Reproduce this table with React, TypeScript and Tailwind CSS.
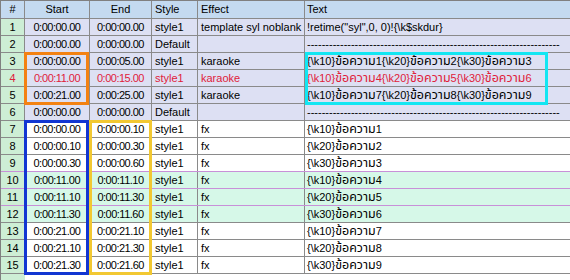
import React from "react";

type Row = {
  n: number;
  start: string;
  end: string;
  style: string;
  effect: string;
  text: string;
  bg: "lav" | "white" | "mint";
  red?: boolean;
  pink?: boolean;
};

const rows: Row[] = [
  { n: 1, start: "0:00:00.00", end: "0:00:00.00", style: "style1", effect: "template syl noblank", text: '!retime("syl",0, 0)!{\\k$skdur}', bg: "lav" },
  { n: 2, start: "0:00:00.00", end: "0:00:00.00", style: "Default", effect: "", text: "-".repeat(69), bg: "lav" },
  { n: 3, start: "0:00:00.00", end: "0:00:05.00", style: "style1", effect: "karaoke", text: "{\\k10}ข้อความ1{\\k20}ข้อความ2{\\k30}ข้อความ3", bg: "lav" },
  { n: 4, start: "0:00:11.00", end: "0:00:15.00", style: "style1", effect: "karaoke", text: "{\\k10}ข้อความ4{\\k20}ข้อความ5{\\k30}ข้อความ6", bg: "lav", red: true },
  { n: 5, start: "0:00:21.00", end: "0:00:25.00", style: "style1", effect: "karaoke", text: "{\\k10}ข้อความ7{\\k20}ข้อความ8{\\k30}ข้อความ9", bg: "lav" },
  { n: 6, start: "0:00:00.00", end: "0:00:00.00", style: "Default", effect: "", text: "-".repeat(69), bg: "lav" },
  { n: 7, start: "0:00:00.00", end: "0:00:00.10", style: "style1", effect: "fx", text: "{\\k10}ข้อความ1", bg: "white" },
  { n: 8, start: "0:00:00.10", end: "0:00:00.30", style: "style1", effect: "fx", text: "{\\k20}ข้อความ2", bg: "white" },
  { n: 9, start: "0:00:00.30", end: "0:00:00.60", style: "style1", effect: "fx", text: "{\\k30}ข้อความ3", bg: "white", pink: true },
  { n: 10, start: "0:00:11.00", end: "0:00:11.10", style: "style1", effect: "fx", text: "{\\k10}ข้อความ4", bg: "mint", pink: true },
  { n: 11, start: "0:00:11.10", end: "0:00:11.30", style: "style1", effect: "fx", text: "{\\k20}ข้อความ5", bg: "mint", pink: true },
  { n: 12, start: "0:00:11.30", end: "0:00:11.60", style: "style1", effect: "fx", text: "{\\k30}ข้อความ6", bg: "mint" },
  { n: 13, start: "0:00:21.00", end: "0:00:21.10", style: "style1", effect: "fx", text: "{\\k10}ข้อความ7", bg: "white" },
  { n: 14, start: "0:00:21.10", end: "0:00:21.30", style: "style1", effect: "fx", text: "{\\k20}ข้อความ8", bg: "white" },
  { n: 15, start: "0:00:21.30", end: "0:00:21.60", style: "style1", effect: "fx", text: "{\\k30}ข้อความ9", bg: "white" },
];

const bgClass = {
  lav: "bg-[#dde0f3]",
  white: "bg-white",
  mint: "bg-[#d6f8e8]",
};

function TextCell({ text }: { text: string }) {
  const parts = text.split(/(ข้อความ)/);
  return (
    <>
      {parts.map((p, i) =>
        p === "ข้อความ" ? (
          <span key={i} className="text-[12.5px]">
            {p}
          </span>
        ) : (
          <span key={i}>{p}</span>
        )
      )}
    </>
  );
}

export default function App() {
  return (
    <div
      className="relative w-[570px] h-[280px] overflow-hidden bg-white text-[11px] leading-none text-black"
      style={{ fontFamily: '"Liberation Sans", Arial, "Noto Sans Thai", "Noto Sans", sans-serif' }}
    >
      <div className="flex flex-col border-l border-t border-[#808080]">
        {/* header */}
        <div className="flex h-[18px] items-center bg-[#c4daf0] border-b border-[#8a8a8a]">
          <div className="w-[24px] h-full flex items-center justify-center border-r border-[#8a8a8a]">#</div>
          <div className="w-[65px] h-full flex items-center justify-center border-r border-[#8a8a8a]">Start</div>
          <div className="w-[62px] h-full flex items-center justify-center border-r border-[#8a8a8a]">End</div>
          <div className="w-[46px] h-full flex items-center pl-[3px] border-r border-[#8a8a8a]">Style</div>
          <div className="w-[107px] h-full flex items-center pl-[3px] border-r border-[#8a8a8a]">Effect</div>
          <div className="flex-1 h-full flex items-center pl-[2px]">Text</div>
        </div>
        {rows.map((r) => (
          <div
            key={r.n}
            className={`flex h-[17px] border-b ${r.pink ? "border-[#c890d8]" : "border-[#8a8a8a]"} ${bgClass[r.bg]} ${r.red ? "text-[#e0203a]" : "text-black"}`}
          >
            <div className="w-[24px] h-full flex items-center justify-center bg-[#cdeed5] border-r border-[#8a8a8a]">{r.n}</div>
            <div className="w-[65px] h-full flex items-center justify-center tracking-[-0.5px] border-r border-[#8a8a8a]">{r.start}</div>
            <div className="w-[62px] h-full flex items-center justify-center tracking-[-0.5px] border-r border-[#8a8a8a]">{r.end}</div>
            <div className="w-[46px] h-full flex items-center pl-[3px] border-r border-[#8a8a8a]">{r.style}</div>
            <div className="w-[107px] h-full flex items-center pl-[3px] border-r border-[#8a8a8a] whitespace-nowrap">{r.effect}</div>
            <div className="flex-1 h-full flex items-center pl-[2px] whitespace-nowrap overflow-hidden">
              <TextCell text={r.text} />
            </div>
          </div>
        ))}
        <div className="flex h-[10px]">
          <div className="w-[24px] h-full bg-[#cdeed5]" />
        </div>
      </div>

      {/* annotation boxes */}
      <div className="absolute left-[24px] top-[52px] w-[65px] h-[53px] border-[3px] border-[#f38212]" />
      <div className="absolute left-[305px] top-[52px] w-[243px] h-[53px] border-[3px] border-[#12e6f2]" />
      <div className="absolute left-[24px] top-[120px] w-[65px] h-[155px] border-[3px] border-[#1236d2]" />
      <div className="absolute left-[89px] top-[120px] w-[63px] h-[155px] border-[3px] border-[#f2c832]" />
    </div>
  );
}
